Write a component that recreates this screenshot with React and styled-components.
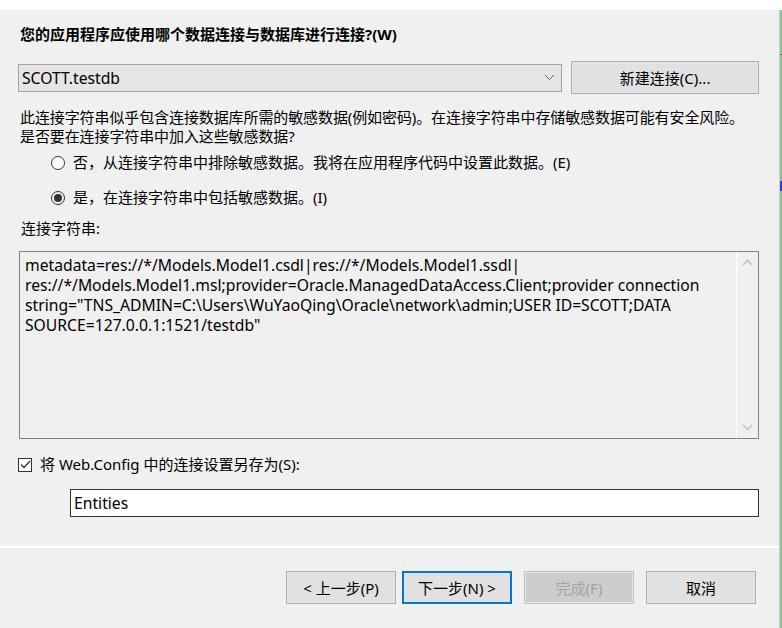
import styled, { createGlobalStyle } from "styled-components";

const GlobalStyle = createGlobalStyle`
  html, body {
    margin: 0;
    padding: 0;
    background: #ffffff;
  }
  body {
    font-family: "Noto Sans", "Noto Sans CJK SC", sans-serif;
    font-size: 15px;
    color: #000;
  }
`;

const connLines = [
  "metadata=res://*/Models.Model1.csdl|res://*/Models.Model1.ssdl|",
  "res://*/Models.Model1.msl;provider=Oracle.ManagedDataAccess.Client;provider connection",
  'string="TNS_ADMIN=C:\\Users\\WuYaoQing\\Oracle\\network\\admin;USER ID=SCOTT;DATA',
  'SOURCE=127.0.0.1:1521/testdb"',
];

const App = () => {
  return (
    <>
      <GlobalStyle />
      <Window>
        <TopBand />
        <Body>
          <Panel>
            <Content>
              <Title>您的应用程序应使用哪个数据连接与数据库进行连接?(W)</Title>
              <ComboRow>
                <Combo>
                  <span>SCOTT.testdb</span>
                  <svg width="11" height="7" viewBox="0 0 11 7">
                    <path d="M1 1 L5.5 5.5 L10 1" fill="none" stroke="#606060" strokeWidth="1" />
                  </svg>
                </Combo>
                <Button $wide>新建连接(C)...</Button>
              </ComboRow>
              <Para>
                此连接字符串似乎包含连接数据库所需的敏感数据(例如密码)。在连接字符串中存储敏感数据可能有安全风险。
                <br />
                是否要在连接字符串中加入这些敏感数据?
              </Para>
              <RadioRow $top={7}>
                <Radio />
                <span>否，从连接字符串中排除敏感数据。我将在应用程序代码中设置此数据。(E)</span>
              </RadioRow>
              <RadioRow $top={16}>
                <Radio $checked />
                <span>是，在连接字符串中包括敏感数据。(I)</span>
              </RadioRow>
              <Label>连接字符串:</Label>
              <ConnBox>
                <ConnText>
                  {connLines.map((l, i) => (
                    <div key={i}>{l}</div>
                  ))}
                </ConnText>
                <ScrollBar>
                  <svg width="11" height="7" viewBox="0 0 11 7">
                    <path d="M1 6 L5.5 1.5 L10 6" fill="none" stroke="#c2c2c2" strokeWidth="1.6" />
                  </svg>
                  <svg width="11" height="7" viewBox="0 0 11 7">
                    <path d="M1 1 L5.5 5.5 L10 1" fill="none" stroke="#c2c2c2" strokeWidth="1.6" />
                  </svg>
                </ScrollBar>
              </ConnBox>
              <CheckRow>
                <CheckBox>
                  <svg width="11" height="9" viewBox="0 0 11 9">
                    <path d="M1 4.5 L4 7.5 L10 1" fill="none" stroke="#333" strokeWidth="1.3" />
                  </svg>
                </CheckBox>
                <span>将 Web.Config 中的连接设置另存为(S):</span>
              </CheckRow>
              <NameInput>Entities</NameInput>
            </Content>
            <Separator />
            <Footer>
              <Button>&lt; 上一步(P)</Button>
              <Button $primary>下一步(N) &gt;</Button>
              <Button $disabled>完成(F)</Button>
              <Button>取消</Button>
            </Footer>
          </Panel>
          <EdgeStrip>
            <Mark $top={44} $color="#e0302a" $h={1} />
            <Mark $top={171} $color="#3a3ad8" $h={10} />
          </EdgeStrip>
        </Body>
      </Window>
    </>
  );
};

export default App;

const Window = styled.div`
  width: 782px;
  height: 628px;
  display: flex;
  flex-direction: column;
  overflow: hidden;
`;

const TopBand = styled.div`
  height: 10px;
  background: #ffffff;
  flex-shrink: 0;
`;

const Body = styled.div`
  flex: 1;
  display: flex;
  flex-direction: row;
`;

const Panel = styled.div`
  width: 779px;
  background: #f0f0f0;
  display: flex;
  flex-direction: column;
`;

const EdgeStrip = styled.div`
  flex: 1;
  position: relative;
  background: #86c596;
  border-left: 1px solid #b8dcc0;
`;

const Mark = styled.div`
  position: absolute;
  left: 0;
  right: 0;
  top: ${(p) => p.$top}px;
  height: ${(p) => p.$h}px;
  background: ${(p) => p.$color};
`;

const Content = styled.div`
  padding: 14px 20px 0 18px;
  display: flex;
  flex-direction: column;
  height: 522px;
  box-sizing: border-box;
`;

const Title = styled.div`
  font-weight: bold;
  line-height: 20px;
  padding-left: 2px;
`;

const ComboRow = styled.div`
  display: flex;
  align-items: center;
  gap: 9px;
  margin-top: 17px;
`;

const Combo = styled.div`
  width: 545px;
  height: 28px;
  box-sizing: border-box;
  border: 1px solid #a3a3a3;
  background: #e5e5e5;
  display: flex;
  align-items: center;
  justify-content: space-between;
  padding: 0 6px 0 3px;
  line-height: 20px;
  font-size: 15.7px;
`;

const Button = styled.div`
  width: ${(p) => (p.$wide ? "188px" : "110px")};
  height: 33px;
  box-sizing: border-box;
  display: flex;
  align-items: center;
  justify-content: center;
  border: ${(p) => (p.$primary ? "2px solid #0078d7" : p.$disabled ? "1px solid #bfbfbf" : "1px solid #adadad")};
  box-shadow: ${(p) => (p.$primary ? "none" : "inset 0 0 0 1px #e6e6e6")};
  color: ${(p) => (p.$disabled ? "#a3a3a3" : "#000")};
  background: ${(p) => (p.$disabled ? "#cccccc" : "#e1e1e1")};
  line-height: 20px;
`;

const Para = styled.div`
  margin-top: 14px;
  padding-left: 2px;
  line-height: 19px;
  letter-spacing: -0.1px;
`;

const RadioRow = styled.div`
  display: flex;
  align-items: center;
  gap: 8px;
  margin-top: ${(p) => p.$top}px;
  padding-left: 33px;
  line-height: 19px;
`;

const Radio = styled.div`
  width: 14px;
  height: 14px;
  box-sizing: border-box;
  border-radius: 50%;
  border: 1px solid #333;
  background: ${(p) => (p.$checked ? "#f0f0f0" : "#fff")};
  display: flex;
  align-items: center;
  justify-content: center;
  &::after {
    content: "";
    display: ${(p) => (p.$checked ? "block" : "none")};
    width: 8px;
    height: 8px;
    border-radius: 50%;
    background: #333;
  }
`;

const Label = styled.div`
  margin-top: 12px;
  padding-left: 3px;
  line-height: 19px;
`;

const ConnBox = styled.div`
  margin-top: 13px;
  margin-left: 1px;
  height: 188px;
  box-sizing: border-box;
  border: 1px solid #828282;
  display: flex;
`;

const ConnText = styled.div`
  flex: 1;
  padding: 3px 0 0 5px;
  line-height: 20px;
  font-size: 15.7px;
  white-space: pre;
  overflow: hidden;
`;

const ScrollBar = styled.div`
  width: 21px;
  border-left: 1px solid #ffffff;
  display: flex;
  flex-direction: column;
  align-items: center;
  justify-content: space-between;
  padding: 7px 0 7px;
`;

const CheckRow = styled.div`
  display: flex;
  align-items: center;
  gap: 8px;
  margin-top: 16px;
  line-height: 19px;
`;

const CheckBox = styled.div`
  width: 14px;
  height: 14px;
  box-sizing: border-box;
  border: 1px solid #333;
  background: #fff;
  display: flex;
  align-items: center;
  justify-content: center;
`;

const NameInput = styled.div`
  margin-top: 15px;
  margin-left: 52px;
  height: 28px;
  box-sizing: border-box;
  border: 1px solid #333;
  background: #fff;
  display: flex;
  align-items: center;
  padding-left: 3px;
  line-height: 20px;
  font-size: 15.7px;
`;

const Separator = styled.div`
  height: 2px;
  background: #ffffff;
  margin-top: 14px;
`;

const Footer = styled.div`
  display: flex;
  align-items: center;
  gap: 12px;
  padding: 23px 0 0 286px;
  & > div:nth-child(2) {
    margin-left: -6px;
  }
`;
